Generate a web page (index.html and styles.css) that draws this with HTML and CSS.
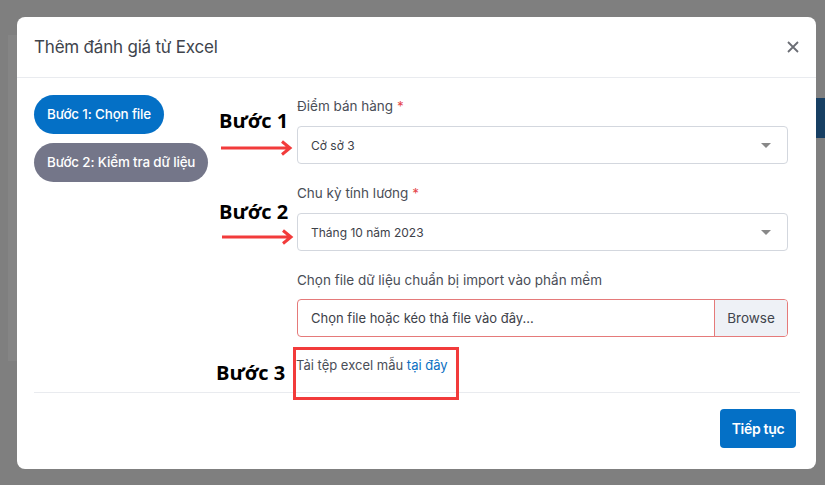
FILE: index.html
```html
<!DOCTYPE html>
<html lang="vi">
<head>
<meta charset="utf-8">
<link rel="stylesheet" href="styles.css">
</head>
<body>
<div class="backdrop">
  <div class="bg-left"></div>
  <div class="bg-right"><div class="bg-blue"></div></div>
  <div class="modal">
    <div class="modal-header">
      <div class="modal-title">Thêm đánh giá từ Excel</div>
      <svg class="close" width="12" height="12" viewBox="0 0 12 12"><path d="M1 1L11 11M11 1L1 11" stroke="#6b6e75" stroke-width="1.8" fill="none"/></svg>
    </div>
    <div class="modal-body">
      <div class="steps">
        <div class="step active">Bước 1: Chọn file</div>
        <div class="step">Bước 2: Kiểm tra dữ liệu</div>
      </div>
      <div class="form">
        <div class="group">
          <label class="label">Điểm bán hàng <span class="req">*</span></label>
          <div class="select"><span>Cở sở 3</span><i class="caret"></i></div>
        </div>
        <div class="group">
          <label class="label">Chu kỳ tính lương <span class="req">*</span></label>
          <div class="select"><span>Tháng 10 năm 2023</span><i class="caret"></i></div>
        </div>
        <div class="group g3">
          <label class="label">Chọn file dữ liệu chuẩn bị import vào phần mềm</label>
          <div class="file">
            <span class="file-text">Chọn file hoặc kéo thả file vào đây...</span>
            <span class="browse">Browse</span>
          </div>
        </div>
        <div class="sample">Tải tệp excel mẫu <a class="link">tại đây</a></div>
      </div>

      <div class="note n1">Bước 1</div>
      <div class="note n2">Bước 2</div>
      <div class="note n3">Bước 3</div>
      <svg class="arrow a1" width="74" height="16" viewBox="0 0 74 16"><path d="M1 8H70M62 1.5L70 8L62 14.5" stroke="#f23b3b" stroke-width="3" fill="none"/></svg>
      <svg class="arrow a2" width="74" height="16" viewBox="0 0 74 16"><path d="M1 8H70M62 1.5L70 8L62 14.5" stroke="#f23b3b" stroke-width="3" fill="none"/></svg>
      <div class="redbox"></div>
    </div>
    <div class="modal-footer">
      <button class="btn">Tiếp tục</button>
    </div>
  </div>
</div>
</body>
</html>
```
FILE: styles.css
```css
html, body {
  margin: 0;
  padding: 0;
}
body {
  width: 825px;
  height: 485px;
  overflow: hidden;
  background: #7f7f7f;
  font-family: Inter, "Noto Sans", sans-serif;
}
.backdrop {
  position: relative;
  width: 825px;
  height: 485px;
  padding: 17px;
  box-sizing: border-box;
}
.bg-left {
  position: absolute;
  left: 8px;
  top: 35px;
  width: 9px;
  height: 326px;
  background: #858585;
}
.bg-right {
  position: absolute;
  left: 816px;
  top: 0;
  width: 9px;
  height: 485px;
  background: #7f7f7f;
}
.bg-blue {
  margin-top: 98px;
  height: 40px;
  background: #173f63;
}
.modal {
  position: relative;
  width: 799px;
  height: 452px;
  background: #fff;
  border-radius: 8px;
  display: flex;
  flex-direction: column;
}
.modal-header {
  height: 61px;
  box-sizing: border-box;
  border-bottom: 1px solid #e9ebef;
  display: flex;
  align-items: center;
  justify-content: space-between;
  padding: 0 17px;
}
.modal-title {
  font-size: 17px;
  color: #40444c;
  letter-spacing: -0.2px;
}
.close {
  display: block;
}
.modal-body {
  position: relative;
  height: 315px;
  box-sizing: border-box;
  padding: 17px 12px 0 0;
  display: flex;
  border-bottom: 1px solid #e9ebef;
  margin: 0 16px 0 17px;
}
.steps {
  width: 263px;
  display: flex;
  flex-direction: column;
  align-items: flex-start;
  gap: 9px;
}
.step {
  height: 39px;
  line-height: 39px;
  padding: 0 13px;
  border-radius: 20px;
  background: #747689;
  color: #fff;
  font-size: 13.4px;
  font-weight: 500;
  letter-spacing: -0.15px;
}
.step.active {
  background: #0470c6;
}
.form {
  flex: 1;
  display: flex;
  flex-direction: column;
}
.group {
  margin-bottom: 18px;
}
.label {
  display: block;
  font-size: 13.5px;
  line-height: 21px;
  color: #4a4e57;
  margin-bottom: 9px;
  margin-top: 1px;
}
.g3 .label {
  margin-bottom: 8px;
}
.req {
  color: #e5484d;
}
.select {
  height: 38px;
  box-sizing: border-box;
  border: 1px solid #d3d7de;
  border-radius: 4px;
  display: flex;
  align-items: center;
  justify-content: space-between;
  padding: 0 16px 0 13px;
  font-size: 12px;
  color: #3d4149;
}
.caret {
  width: 0;
  height: 0;
  border-left: 5px solid transparent;
  border-right: 5px solid transparent;
  border-top: 5px solid #888;
}
.file {
  height: 38px;
  box-sizing: border-box;
  border: 1px solid #e57a7a;
  border-radius: 4px;
  display: flex;
  align-items: stretch;
  overflow: hidden;
}
.file-text {
  flex: 1;
  display: flex;
  align-items: center;
  padding-left: 13px;
  font-size: 13px;
  color: #3d4149;
}
.browse {
  width: 72px;
  display: flex;
  align-items: center;
  justify-content: center;
  background: #eef1f6;
  border-left: 1px solid #e57a7a;
  font-size: 13.5px;
  color: #40444c;
}
.sample {
  font-size: 13px;
  line-height: 18px;
  color: #4a4e57;
  margin-top: 1px;
  margin-left: -1px;
}
.link {
  color: #0a6fc2;
}
.note {
  position: absolute;
  font-family: "Open Sans", "Noto Sans", sans-serif;
  font-weight: 700;
  font-size: 20px;
  line-height: 24px;
  color: #000;
}
.n1 { left: 185px; top: 31px; }
.n2 { left: 185px; top: 122px; }
.n3 { left: 182px; top: 283px; }
.arrow {
  position: absolute;
  display: block;
}
.a1 { left: 186px; top: 62px; }
.a2 { left: 187px; top: 151px; }
.redbox {
  position: absolute;
  left: 259px;
  top: 269px;
  width: 166px;
  height: 53px;
  box-sizing: border-box;
  border: 3px solid #f23b3b;
}
.modal-footer {
  flex: 1;
  display: flex;
  justify-content: flex-end;
  align-items: flex-start;
  padding: 16px 20px 0 0;
}
.btn {
  height: 39px;
  width: 76px;
  border: none;
  border-radius: 4px;
  background: #0470c6;
  color: #fff;
  font-family: Inter, "Noto Sans", sans-serif;
  font-weight: 600;
  font-size: 14px;
  letter-spacing: -0.3px;
  padding: 0;
}
```
